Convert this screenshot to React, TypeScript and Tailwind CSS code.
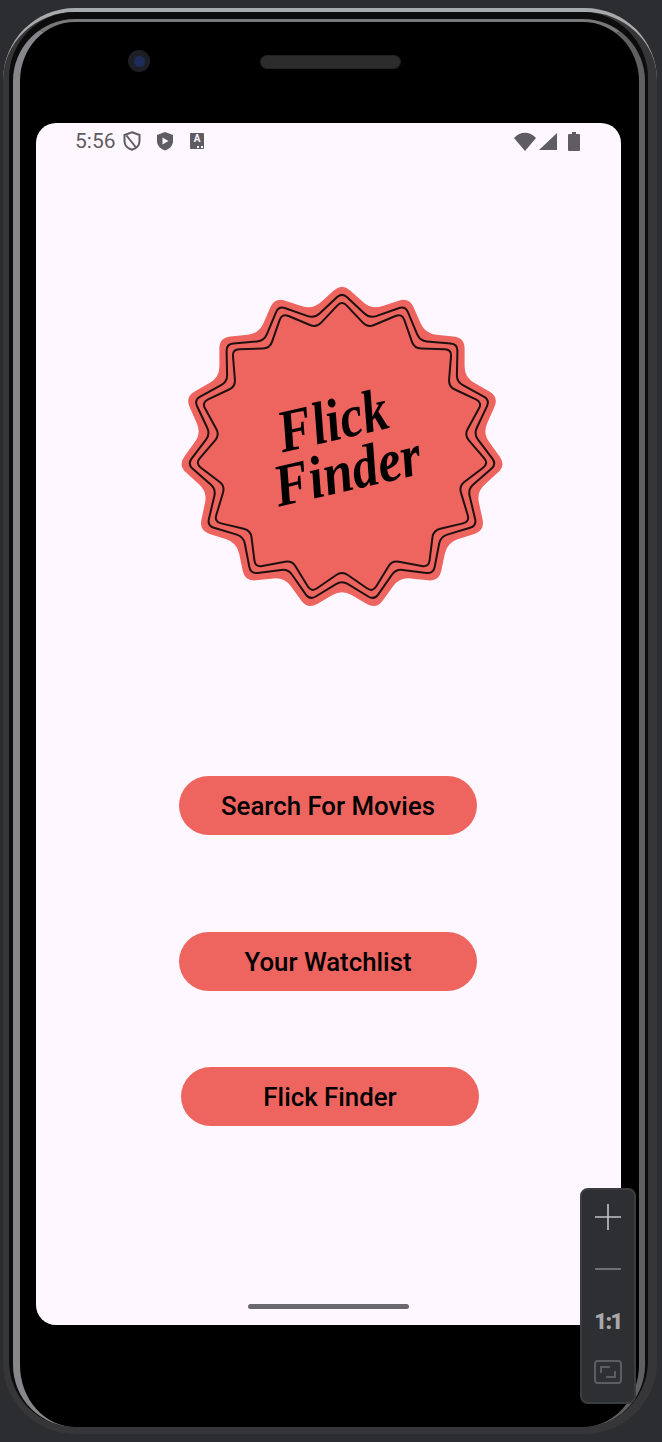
import React from 'react'

const starPath = (peak: number, valley: number, trim: number) => {
  const pts = Array.from({ length: 30 }, (_, i) => {
    const a = (i * 12 * Math.PI) / 180
    const r = i % 2 === 0 ? peak : valley
    return [170 + r * Math.sin(a), 170 - r * Math.cos(a)]
  })
  let d = ''
  pts.forEach((v, i) => {
    const prev = pts[(i + 29) % 30]
    const next = pts[(i + 1) % 30]
    const toward = (o: number[]) => {
      const len = Math.hypot(o[0] - v[0], o[1] - v[1])
      return [v[0] + ((o[0] - v[0]) * trim) / len, v[1] + ((o[1] - v[1]) * trim) / len]
    }
    const a = toward(prev)
    const b = toward(next)
    d += `${i ? 'L' : 'M'}${a[0].toFixed(1)} ${a[1].toFixed(1)}Q${v[0].toFixed(1)} ${v[1].toFixed(1)} ${b[0].toFixed(1)} ${b[1].toFixed(1)}`
  })
  return d + 'Z'
}

const Logo = () => (
  <svg width={340} height={340} viewBox="0 0 340 340" className="block">
    <path d={starPath(165, 141.500, 11)} fill="#ee6560" />
    <path d={starPath(155.500, 132.500, 7)} fill="none" stroke="#1f1110" strokeWidth={2} />
    <path d={starPath(147.500, 123, 7)} fill="none" stroke="#1f1110" strokeWidth={2} />
    <g transform="rotate(-13 170 170)" textAnchor="middle" fill="#000" className="font-['Liberation_Serif'] italic font-bold">
      <text transform="translate(167 161) scale(0.86 1)" fontSize={60}>Flick</text>
      <text transform="translate(170 213) scale(0.88 1)" fontSize={60}>Finder</text>
    </g>
  </svg>
)

const StatusBar = () => (
  <div className="flex items-center h-[22px] mt-[7px] pl-[39px] pr-[41px] text-[#5f5d63]">
    <span className="font-['Roboto'] text-[21px] leading-none w-[48px]">5:56</span>
    <svg width={18} height={20} viewBox="0 0 18 20" fill="none" stroke="#5f5d63" strokeWidth={2}>
      <path d="M9 1.200l7.500 2.800v6c0 4.200-3 7.400-7.500 8.800-4.500-1.400-7.500-4.600-7.500-8.800V4z" />
      <path d="M3.500 4.500l9.500 12" />
    </svg>
    <svg width={18} height={20} viewBox="0 0 18 20" className="ml-[15px]" fill="#5f5d63">
      <path d="M9 1l8 3v6c0 4.500-3.400 8-8 9.500C4.400 18 1 14.500 1 10V4z" />
      <path d="M6.500 6.500v7l6-3.500z" fill="#fef7ff" />
    </svg>
    <div className="ml-[16px] w-[14px] h-[16px] bg-[#5f5d63] rounded-[1px] flex flex-col items-center relative">
      <span className="font-['Roboto'] font-bold text-[10px] leading-[12px] text-[#fef7ff]">A</span>
      <span className="absolute right-[1px] bottom-[1px] w-[6px] h-[2px] border-b-2 border-dotted border-[#fef7ff]" />
    </div>
    <div className="flex-1" />
    <svg width={22} height={19} viewBox="0 0 22 19" fill="#5f5d63">
      <path d="M0 6C6-1 16-1 22 6L11 19z" />
    </svg>
    <svg width={18} height={18} viewBox="0 0 18 18" className="ml-[3px]" fill="#5f5d63">
      <path d="M0 18L18 1v17z" />
    </svg>
    <svg width={12} height={19} viewBox="0 0 12 19" className="ml-[11px]" fill="#5f5d63">
      <path d="M4 0h4v2h3a1 1 0 0 1 1 1v15a1 1 0 0 1-1 1H1a1 1 0 0 1-1-1V3a1 1 0 0 1 1-1h3z" />
    </svg>
  </div>
)

const MenuButton = ({ label, className }: { label: string; className: string }) => (
  <button className={`w-[298px] h-[59px] rounded-[30px] bg-[#ee6560] text-black font-['Roboto'] font-medium text-[25.8px] pt-[1px] flex items-center justify-center ${className}`}>
    {label}
  </button>
)

const ZoomControls = () => (
  <div className="absolute left-[580px] top-[1188px] w-[56px] h-[216px] rounded-[8px] bg-[#2e2f33] border-2 border-[#3c3d40] flex flex-col items-center">
    <svg width={26} height={26} viewBox="0 0 26 26" className="mt-[14px]" stroke="#c4c4c6" strokeWidth={1.6}>
      <path d="M0 13h26M13 0v26" />
    </svg>
    <svg width={26} height={2} viewBox="0 0 26 2" className="mt-[38px]" stroke="#6f7072" strokeWidth={2}>
      <path d="M0 1h26" />
    </svg>
    <span className="mt-[40px] font-['Roboto'] font-black text-[22px] leading-[24px] tracking-[-1.500px] text-[#a8a8aa]">1:1</span>
    <div className="mt-[26px] w-[28px] h-[24px] rounded-[4px] border-2 border-[#5c5d60] relative">
      <span className="absolute left-[4px] top-[4px] w-[10px] h-[7px] border-l-2 border-t-2 border-[#5c5d60]" />
      <span className="absolute right-[4px] bottom-[4px] w-[10px] h-[7px] border-r-2 border-b-2 border-[#5c5d60]" />
    </div>
  </div>
)

const App = () => {
  return (
    <div className="relative w-[662px] h-[1442px] bg-[#2b2d30] pt-[8px] pl-[3px] overflow-hidden">
      {/* device skin */}
      <div className="w-[654px] h-[1426px] rounded-[72px] bg-[#363638] border-t-[4px] border-t-[#a9aaab] pl-[6px] pr-[9px] pb-[7px]">
        <div className="h-full rounded-[66px] bg-[#0c0c0c] pt-[7px] pl-[4px] pr-[3px]">
          <div className="h-full rounded-[62px] bg-black border-t-[3px] border-t-[#777879] border-l-[7px] border-l-[#85878a] border-r-[6px] border-r-[#5f6062] pl-[16px]">
            {/* camera + speaker */}
            <div className="h-[101px] flex items-start">
              <div className="ml-[92px] mt-[28px] w-[22px] h-[22px] rounded-full bg-[#1d1f24] flex items-center justify-center">
                <div className="w-[11px] h-[11px] rounded-full bg-[#1e2c5c]" />
              </div>
              <div className="ml-[110px] mt-[33px] w-[141px] h-[14px] rounded-full bg-[#2c2c2c] border border-[#222]" />
            </div>

            {/* screen */}
            <div className="w-[585px] h-[1202px] rounded-[20px] bg-[#fef7ff] flex flex-col">
              <StatusBar />
              <div className="mt-[126px] ml-[136px]">
                <Logo />
              </div>
              <MenuButton label="Search For Movies" className="mt-[158px] ml-[143px]" />
              <MenuButton label="Your Watchlist" className="mt-[97px] ml-[143px]" />
              <MenuButton label="Flick Finder" className="mt-[76px] ml-[145px]" />
              <div className="mt-[178px] ml-[212px] w-[161px] h-[5px] rounded-full bg-[#6b6870]" />
            </div>
          </div>
        </div>
      </div>
      <ZoomControls />
    </div>
  )
}

export default App
